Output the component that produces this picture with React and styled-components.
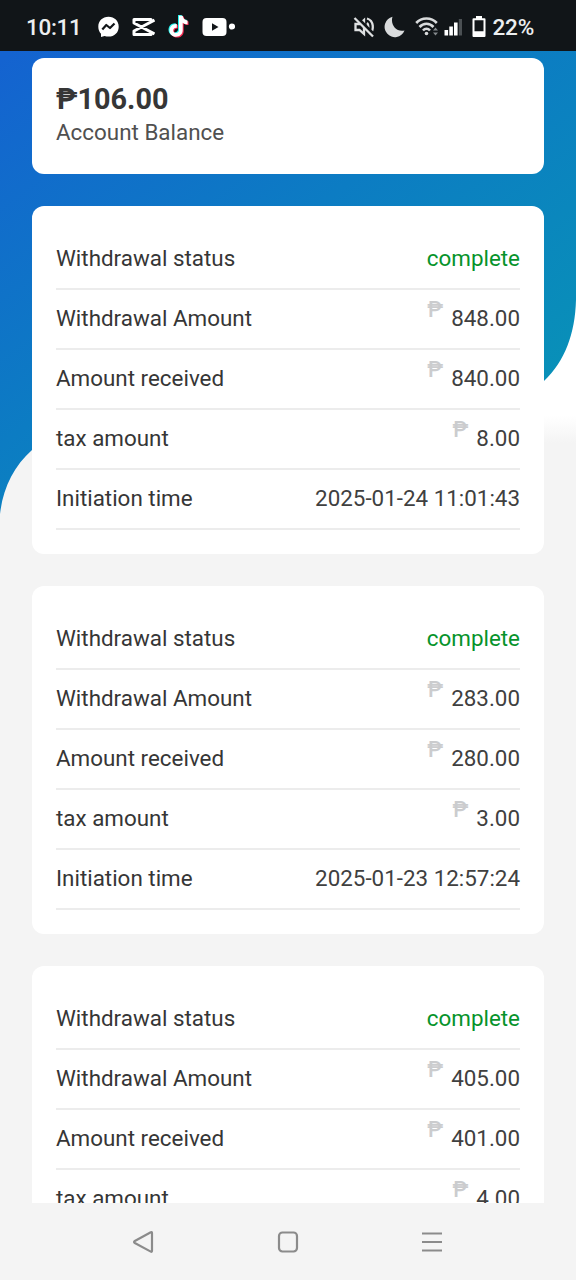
import React from 'react';
import styled, { createGlobalStyle } from 'styled-components';

/*──────── data ─────*/
const RECORDS = [
  { id: 1, amount: '848.00', received: '840.00', tax: '8.00', time: '2025-01-24 11:01:43' },
  { id: 2, amount: '283.00', received: '280.00', tax: '3.00', time: '2025-01-23 12:57:24' },
  { id: 3, amount: '405.00', received: '401.00', tax: '4.00' },
];

/*──────── shells ─────*/
const GlobalStyle = createGlobalStyle`
  * { box-sizing: border-box; }
  body {
    margin: 0;
    background: #f4f4f4;
    font-family: Roboto, sans-serif;
    color: #363636;
  }
`;

const Screen = styled.div`
  display: flex;
  flex-direction: column;
  height: 100vh;
  overflow: hidden;
`;

const StatusBar = styled.header`
  flex: none;
  height: 51px;
  padding: 2px 42px 0 26px;
  display: flex;
  justify-content: space-between;
  align-items: center;
  background: #111518;
  color: #eceeef;
  font-size: 22.5px;
  font-weight: 500;

  svg { display: block; flex: none; }
`;

const Group = styled.div`
  display: flex;
  align-items: center;
  gap: ${p => p.$gap}px;
`;

const Clock = styled.span`
  width: 59px;
  letter-spacing: -.3px;
  white-space: nowrap;
`;

const Percent = styled.span`
  letter-spacing: -.2px;
`;

const Content = styled.main`
  flex: 1;
  min-height: 0;
  position: relative;
  overflow: hidden;
  padding: 7px 32px 0;
`;

const Backdrop = styled.svg`
  position: absolute;
  top: 0; left: 0;
  z-index: -1;
`;

const Stack = styled.div`
  display: flex;
  flex-direction: column;
  gap: 32px;
`;

const Card = styled.section`
  flex: none;
  padding: 24px;
  border-radius: 12px;
  background: #fff;
`;

const BalanceCard = styled(Card)`
  height: 116px;
  padding-top: 23px;
`;

const Balance = styled.div`
  font-size: 28.8px;
  line-height: 36px;
  font-weight: 700;
`;

const BalanceLabel = styled.div`
  font-size: 22.4px;
  line-height: 31px;
  color: #505050;
`;

const Row = styled.div`
  display: flex;
  justify-content: space-between;
  height: 60px;
  line-height: 56px;
  border-bottom: 2px solid #ececec;
  font-size: 22.4px;
  white-space: nowrap;
`;

const Value = styled.span`
  display: flex;
  color: ${p => (p.$done ? '#07932b' : '#404040')};
`;

const Unit = styled.span`
  margin-right: 8px;
  font-size: 21.5px;
  line-height: 40px;
  font-weight: 500;
  color: #cbccce;
`;

const NavBar = styled.nav`
  flex: none;
  height: 77px;
  padding: 0 72px;
  display: grid;
  grid-template-columns: repeat(3, 1fr);
  place-items: center;
  background: #f4f4f4;
`;

/*──────── status icons ─────*/
const Messenger = () => (
  <svg width="22" height="22" viewBox="0 0 22 22">
    <path fill="#fff" d="M11.500 .8C5.500.8 1.300 5 1.300 10.700c0 3 1.200 5.500 2.700 7v3.400l3.600-1.100c1.200.4 2.500.6 3.900.6 6 0 10.200-4.200 10.200-9.900S17.500.8 11.500.8z" />
    <path fill="none" stroke="#111518" strokeWidth="2.200" strokeLinejoin="round" d="M5.300 13.500 9.300 9l3.700 3 4.500-4.500" />
  </svg>
);

const CapCut = () => (
  <svg width="24" height="20" viewBox="0 0 24 20" fill="none" stroke="#fff" strokeWidth="3" strokeLinejoin="round">
    <path d="M23.500 3 3 14v3.500h17V14M23.500 17 3 6V2.500h17V6" />
  </svg>
);

const NOTE = 'M11.500 1h3.700c.3 2.700 2 4.500 4.800 4.800v3.700c-1.800 0-3.400-.5-4.800-1.500v7.300c0 4-3 6.700-6.700 6.700S2 19.200 2 15.700c0-4 3.200-6.900 7.300-6.500v3.800c-2-.4-3.600.9-3.600 2.700 0 1.500 1.200 2.600 2.800 2.600s3-1.100 3-3z';
const TikTok = () => (
  <svg width="22" height="25" viewBox="0.500 0 22 25">
    <path fill="#25f4ee" d={NOTE} />
    <path fill="#fe2c55" d={NOTE} transform="translate(2 1.600)" />
    <path fill="#fff" d={NOTE} transform="translate(1 .8)" />
  </svg>
);

const YouTube = () => (
  <svg width="34" height="20" viewBox="0 0 34 20">
    <rect x="1.500" y="1" width="24" height="18" rx="4" fill="#fff" />
    <path fill="#111518" d="m11 6.200 6.500 3.800-6.500 3.800z" />
    <circle cx="31" cy="9.500" r="3.100" fill="#fff" />
  </svg>
);

const Muted = () => (
  <svg width="22" height="22" viewBox="0 0 22 22" fill="none" stroke="#dfe1e2" strokeWidth="2.300">
    <path d="M2.500 8h4l4.500-4v14l-4.500-4h-4zM14 7c1.800 1.500 1.800 6 0 7.500M14 2.500c7 2 7.500 12 2.500 15.500" />
    <path stroke="#111518" strokeWidth="4" d="m3 1 18.500 18.500" />
    <path d="m1.500 2 18.500 18.500" />
  </svg>
);

const Moon = () => (
  <svg width="22" height="22" viewBox="0 0 22 22">
    <path fill="#d9dbdc" d="M8.500 .8A10.300 10.300 0 1 0 20.500 14.500C12.500 16.500 6 9 8.500 .8z" />
  </svg>
);

const Wifi = () => (
  <svg width="24" height="20" viewBox="0 0 24 20" fill="none" stroke="#d9dbdc" strokeWidth="2.600">
    <path d="M1.200 6c5.500-6 15-6 20.600 0M4.500 10c4-4.300 10-4.300 14 0M8 13.500c2-2.300 5-2.300 7 0" />
    <circle cx="11.500" cy="16.500" r="1.800" fill="#d9dbdc" stroke="none" />
    <path fill="#858a8d" stroke="none" d="m18 13.500 2.500-3 2.500 3zM18 15.500l2.500 3 2.500-3z" />
  </svg>
);

const Signal = () => (
  <svg width="19" height="18" viewBox="0 0 19 18" fill="#fff">
    <path d="M.5 12h3.600v5.500H.500zM5.300 8.500h3.600v9H5.300zM10 4.500h3.600v13H10z" />
    <path fill="#4b5053" d="M14.800 1h3.200v16.500h-3.200z" />
  </svg>
);

const Battery = () => (
  <svg width="14" height="23" viewBox="0 0 14 22" preserveAspectRatio="none" fill="#fff">
    <path fillRule="evenodd" d="M4 1h6v2h2.500q1 0 1 1v16q0 1-1 1h-11q-1 0-1-1V4q0-1 1-1H4zM2.500 5v10.500h9V5z" />
  </svg>
);

/*──────── nav icons ─────*/
const navIcon = { width: 24, height: 24, viewBox: '0 0 24 24', fill: 'none', stroke: '#8b8b8b', strokeWidth: 2.2 };

const Back = () => (
  <svg {...navIcon} strokeLinejoin="round">
    <path d="M18.800 2.200q1.200-.7 1.200 1v17.400q0 1.700-1.200 1L2.800 13q-1.500-1 0-2z" />
  </svg>
);
const Home = () => (
  <svg {...navIcon}><rect x="3" y="2.500" width="18" height="19" rx="3.500" /></svg>
);
const Menu = () => (
  <svg {...navIcon}><path d="M2 3.500h20M2 12h20M2 20.500h20" /></svg>
);

/* blue header with its slanted wave, fading into the page grey */
const Wave = () => (
  <Backdrop width="576" height="500" viewBox="0 51 576 500">
    <defs>
      <linearGradient id="blue" gradientUnits="userSpaceOnUse" x1="0" y1="60" x2="370" y2="550">
        <stop offset="0" stopColor="#1463d0" />
        <stop offset=".5" stopColor="#0c7cc3" />
        <stop offset="1" stopColor="#0892b7" />
      </linearGradient>
      <linearGradient id="fade" x1="0" y1="0" x2="0" y2="1">
        <stop offset="0" stopColor="#fff" />
        <stop offset=".93" stopColor="#fff" />
        <stop offset="1" stopColor="#f4f4f4" />
      </linearGradient>
    </defs>
    <rect x="288" y="51" width="288" height="392" fill="url(#fade)" />
    <path fill="url(#blue)" d="M0 51h576v249c-1 34-11 61-32 81L32 450C14 466 3 488 0 514z" />
  </Backdrop>
);

/*──────── component ─────*/
const Money = ({ label, value }) => (
  <Row>
    <span>{label}</span>
    <Value><Unit>₱</Unit>{value}</Value>
  </Row>
);

const Withdrawal = ({ amount, received, tax, time }) => (
  <Card>
    <Row><span>Withdrawal status</span><Value $done>complete</Value></Row>
    <Money label="Withdrawal Amount" value={amount} />
    <Money label="Amount received" value={received} />
    <Money label="tax amount" value={tax} />
    {time && <Row><span>Initiation time</span><Value>{time}</Value></Row>}
  </Card>
);

export default function App() {
  return (
    <Screen>
      <GlobalStyle />
      <StatusBar>
        <Group $gap={12}>
          <Clock>10:11</Clock>
          <Messenger />
          <CapCut />
          <TikTok />
          <YouTube />
        </Group>
        <Group $gap={9}>
          <Muted />
          <Moon />
          <Group $gap={5}>
            <Wifi />
            <Signal />
          </Group>
          <Group $gap={6}>
            <Battery />
            <Percent>22%</Percent>
          </Group>
        </Group>
      </StatusBar>

      <Content>
        <Wave />
        <Stack>
          <BalanceCard>
            <Balance>₱106.00</Balance>
            <BalanceLabel>Account Balance</BalanceLabel>
          </BalanceCard>
          {RECORDS.map(({ id, ...r }) => <Withdrawal key={id} {...r} />)}
        </Stack>
      </Content>

      <NavBar>
        <Back />
        <Home />
        <Menu />
      </NavBar>
    </Screen>
  );
}
